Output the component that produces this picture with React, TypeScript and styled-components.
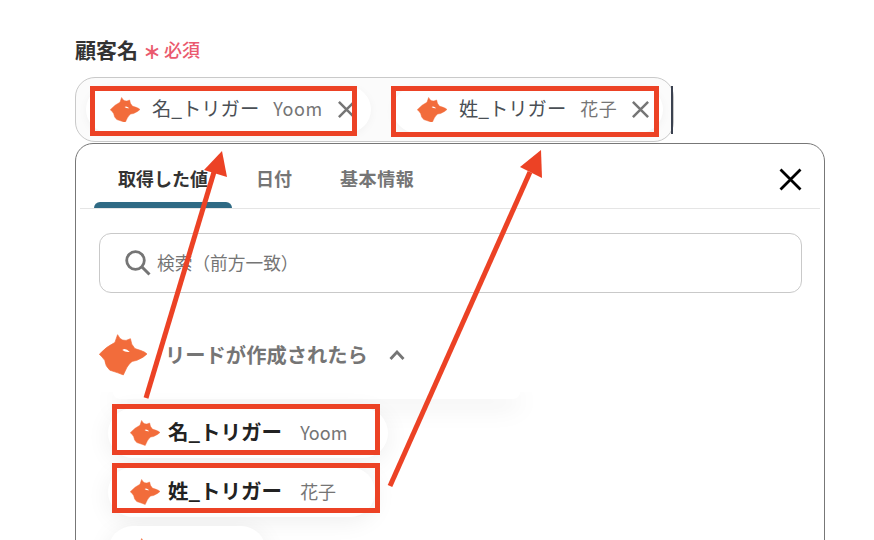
import React from 'react'
import styled, {createGlobalStyle} from "styled-components"

const FOX = "M65 14 L72 25 L80 30 L90 31 L103 26 L107 42 L116 55 L134 61 Q146 65 152 71 Q144 80 122 90 L108 93 Q98 100 92 112 L82 133 L66 127 L42 119 Q29 108 27 90 L19 80 L11 72 Q30 50 57 37 Z"
const EYE = "M79 59 Q88 52 101 65 Q88 67 79 59 Z"

const Fox = ({size} : {size: number}) => (
    <FoxSvg viewBox="10 12 142 122" width={size} height={size * 122 / 142}>
        <path d={FOX} fill="#f26c3b" stroke="#f26c3b" strokeWidth="2" strokeLinejoin="round"/>
        <path d={EYE} fill="#ffffff"/>
    </FoxSvg>
)

const Cross = ({size, color, weight} : {size: number, color: string, weight: number}) => (
    <svg viewBox="0 0 20 20" width={size} height={size}>
        <path d="M2 2 L18 18 M18 2 L2 18" stroke={color} strokeWidth={weight} fill="none"/>
    </svg>
)

function App() {
    return (
        <Page>
            <GlobalStyle/>
            <Label>
                顧客名
                <Star>＊</Star>
                <Required>必須</Required>
            </Label>
            <Field>
                <Chip $width={285}>
                    <Fox size={30}/>
                    <ChipName>名_トリガー</ChipName>
                    <ChipValue>Yoom</ChipValue>
                    <ChipClose><Cross size={19} color="#757575" weight={2.6}/></ChipClose>
                </Chip>
                <Chip $width={270}>
                    <Fox size={30}/>
                    <ChipName>姓_トリガー</ChipName>
                    <ChipValue>花子</ChipValue>
                    <ChipClose><Cross size={19} color="#757575" weight={2.6}/></ChipClose>
                </Chip>
                <Caret/>
            </Field>
            <Panel>
                <TabBar>
                    <Tab $active>取得した値</Tab>
                    <Tab>日付</Tab>
                    <Tab $spaced>基本情報</Tab>
                    <Close><Cross size={25} color="#000000" weight={2.2}/></Close>
                </TabBar>
                <Search>
                    <svg viewBox="0 0 26 26" width="26" height="26">
                        <circle cx="10.5" cy="10.5" r="8.8" stroke="#757575" strokeWidth="2.8" fill="none"/>
                        <path d="M17 17 L24.5 24.5" stroke="#757575" strokeWidth="3" fill="none"/>
                    </svg>
                    <SearchText>検索（前方一致）</SearchText>
                </Search>
                <Group>
                    <Fox size={48}/>
                    <GroupTitle>リードが作成されたら</GroupTitle>
                    <svg viewBox="0 0 16 10" width="16" height="10">
                        <path d="M1.5 9 L8 2 L14.5 9" stroke="#757575" strokeWidth="2.8" fill="none"/>
                    </svg>
                </Group>
                <Rows>
                    <GroupEnd/>
                    <Row $width={280}>
                        <Fox size={30}/>
                        <RowName>名_トリガー</RowName>
                        <RowValue>Yoom</RowValue>
                    </Row>
                    <Row $width={267}>
                        <Fox size={30}/>
                        <RowName>姓_トリガー</RowName>
                        <RowValue>花子</RowValue>
                    </Row>
                    <Row $width={158}>
                        <Fox size={30}/>
                    </Row>
                </Rows>
            </Panel>
            <Marker $x={90} $y={86} $w={267} $h={50}/>
            <Marker $x={391} $y={86} $w={268} $h={51}/>
            <Marker $x={112} $y={404} $w={268} $h={51}/>
            <Marker $x={112} $y={463} $w={268} $h={50}/>
            <Arrows viewBox="0 0 874 540" width="874" height="540">
                <path d="M146 398 L214 172" stroke="#ec4225" strokeWidth="5" fill="none"/>
                <path d="M222 151 L204 170 L227 177 Z" fill="#ec4225"/>
                <path d="M390 486 L530 172" stroke="#ec4225" strokeWidth="5" fill="none"/>
                <path d="M541 150 L520 167 L542 178 Z" fill="#ec4225"/>
            </Arrows>
        </Page>
    )
}

export default App

const GlobalStyle = createGlobalStyle`
    html, body {
        margin: 0;
        padding: 0;
        background: #ffffff;
    }
`

const Page = styled.div`
    position: relative;
    width: 874px;
    height: 540px;
    overflow: hidden;
    box-sizing: border-box;
    padding: 34px 49px 0 75px;
    font-family: "Noto Sans CJK JP", "Noto Sans", sans-serif;
    color: #333333;
`

const FoxSvg = styled.svg`
    flex: none;
    display: block;
`

const Label = styled.div`
    display: flex;
    align-items: center;
    height: 30px;
    font-size: 21px;
    font-weight: 700;
    line-height: 30px;
    color: #333333;
`

const Star = styled.span`
    margin-left: 5px;
    font-size: 18px;
    font-weight: 900;
    line-height: 30px;
    padding-top: 3px;
    color: #ea5a6e;
`

const Required = styled.span`
    margin-left: 3px;
    font-size: 18px;
    font-weight: 500;
    color: #ea5a6e;
`

const Field = styled.div`
    display: flex;
    align-items: center;
    gap: 22px;
    box-sizing: border-box;
    width: 599px;
    height: 65px;
    margin-top: 13px;
    padding-left: 10px;
    background: #fbfbfb;
    border: 1px solid #c9c9c9;
    border-radius: 20px;
`

const Chip = styled.div<{$width: number}>`
    display: flex;
    align-items: center;
    box-sizing: border-box;
    flex: none;
    width: ${p => p.$width}px;
    height: 47px;
    padding-left: 24px;
    background: #ffffff;
    border-radius: 24px;
    box-shadow: 0 2px 10px rgba(0, 0, 0, 0.04);
`

const ChipName = styled.span`
    margin-left: 12px;
    padding-bottom: 3px;
    font-size: 19.3px;
    white-space: nowrap;
    color: #4a4f55;
`

const ChipValue = styled.span`
    margin-left: 14px;
    padding-bottom: 3px;
    font-size: 18px;
    letter-spacing: 0.6px;
    color: #757575;
`

const ChipClose = styled.span`
    display: flex;
    margin-left: 14px;
`

const Caret = styled.div`
    flex: none;
    width: 2px;
    height: 48px;
    margin-left: -14px;
    background: #3b4250;
`

const Panel = styled.div`
    box-sizing: border-box;
    width: 750px;
    height: 500px;
    margin-top: 1px;
    background: #ffffff;
    border: 1px solid #777777;
    border-radius: 18px;
`

const TabBar = styled.div`
    display: flex;
    align-items: stretch;
    box-sizing: border-box;
    height: 65px;
    margin: 0 4px;
    padding-left: 14px;
    border-bottom: 1px solid #e5e5e5;
`

const Tab = styled.div<{$active?: boolean, $spaced?: boolean}>`
    position: relative;
    display: flex;
    align-items: center;
    padding: 3px 24px 0;
    font-size: 18px;
    font-weight: 700;
    letter-spacing: ${p => p.$spaced ? "0.6px" : "0"};
    color: ${p => p.$active ? "#333333" : "#757575"};

    &::after {
        content: "";
        display: ${p => p.$active ? "block" : "none"};
        position: absolute;
        left: 0;
        right: 0;
        bottom: 0;
        height: 6px;
        background: #2f6a84;
        border-radius: 6px 6px 0 0;
    }
`

const Close = styled.div`
    display: flex;
    align-items: center;
    margin-left: auto;
    margin-right: 17px;
    padding-top: 6px;
`

const Search = styled.div`
    display: flex;
    align-items: center;
    box-sizing: border-box;
    height: 60px;
    margin: 24px 22px 0 23px;
    padding-left: 25px;
    border: 1px solid #c9c9c9;
    border-radius: 12px;
`

const SearchText = styled.span`
    margin-left: 6px;
    padding-bottom: 3px;
    font-size: 17.7px;
    color: #757575;
`

const Group = styled.div`
    display: flex;
    align-items: center;
    height: 40px;
    margin: 42px 0 0 23px;
`

const GroupTitle = styled.span`
    margin: 0 21px 0 18px;
    padding-bottom: 2px;
    font-size: 20.3px;
    font-weight: 700;
    color: #757575;
`

const Rows = styled.div`
    display: flex;
    flex-direction: column;
    align-items: flex-start;
    gap: 9px;
    height: 160px;
    margin-top: 17px;
    overflow: hidden;
`

const GroupEnd = styled.div`
    flex: none;
    width: 407px;
    height: 7px;
    margin-left: 37px;
    background: #ffffff;
    border-radius: 0 0 22px 22px;
    box-shadow: 0 6px 26px rgba(0, 0, 0, 0.13);
`

const Row = styled.div<{$width: number}>`
    display: flex;
    align-items: center;
    flex: none;
    box-sizing: border-box;
    width: ${p => p.$width}px;
    height: 50px;
    margin-left: 32px;
    padding-left: 22px;
    background: #ffffff;
    border-radius: 25px;
    box-shadow: 0 4px 24px rgba(0, 0, 0, 0.07);
`

const RowName = styled.span`
    margin-left: 8px;
    padding-bottom: 4px;
    font-size: 20.5px;
    font-weight: 700;
    white-space: nowrap;
    color: #222222;
`

const RowValue = styled.span`
    margin-left: 18px;
    padding-bottom: 3px;
    font-size: 18px;
    color: #757575;
`

const Marker = styled.div<{$x: number, $y: number, $w: number, $h: number}>`
    position: absolute;
    left: ${p => p.$x}px;
    top: ${p => p.$y}px;
    width: ${p => p.$w}px;
    height: ${p => p.$h}px;
    box-sizing: border-box;
    border: 5px solid #ec4225;
`

const Arrows = styled.svg`
    position: absolute;
    left: 0;
    top: 0;
    pointer-events: none;
`
